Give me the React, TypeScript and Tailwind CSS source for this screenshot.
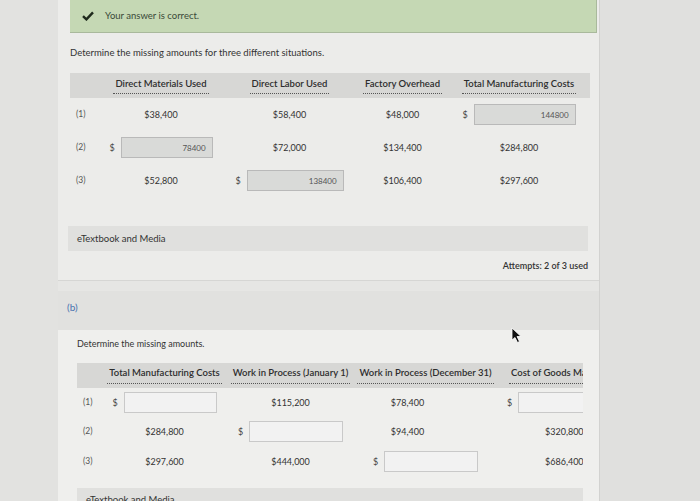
import React from 'react'

const font = { fontFamily: 'Lato, "Open Sans", sans-serif' }

function Input({ value, w, filled }: { value?: string; w: string; filled?: boolean }) {
    return (
        <div
            className={`${w} h-[21px] border flex items-center justify-end pr-[6px] text-[8px] text-[#555] ${filled ? 'bg-[#d9dad8] border-[#b9b9b9]' : 'bg-[#f2f2f2] border-[#c9c9c9]'}`}
        >
            {value}
        </div>
    )
}

function Money({ value, w, filled }: { value?: string; w: string; filled?: boolean }) {
    return (
        <div className="flex items-center gap-[6px]">
            <span className="text-[9px] text-[#444]">$</span>
            <Input value={value} w={w} filled={filled} />
        </div>
    )
}

function Head({ children }: { children: React.ReactNode }) {
    return (
        <span className="border-b border-dotted border-[#555] pb-[2px] px-[2px] font-semibold text-[9.5px] text-[#2d2d2d] whitespace-nowrap">
            {children}
        </span>
    )
}

export default function App() {
    const cols1 = ['w-[30px]', 'w-[122px]', 'w-[135px]', 'w-[91px]', 'w-[142px]']
    const rows1: React.ReactNode[][] = [
        ['(1)', '$38,400', '$58,400', '$48,000', <Money w="w-[102px]" value="144800" filled />],
        ['(2)', <Money w="w-[92px]" value="78400" filled />, '$72,000', '$134,400', '$284,800'],
        ['(3)', '$52,800', <Money w="w-[97px]" value="138400" filled />, '$106,400', '$297,600'],
    ]

    const cols2 = ['w-[29px]', 'w-[117px]', 'w-[135px]', 'w-[135px]', 'w-[110px]']
    const rows2: React.ReactNode[][] = [
        ['(1)', <Money w="w-[93px]" />, '$115,200', <span className="pr-[36px]">$78,400</span>, <div className="pl-[14px] w-full"><Money w="w-[80px]" /></div>],
        ['(2)', '$284,800', <Money w="w-[94px]" />, <span className="pr-[36px]">$94,400</span>, <span className="pl-[52px] whitespace-nowrap">$320,800</span>],
        ['(3)', '$297,600', '$444,000', <Money w="w-[94px]" />, <span className="pl-[52px] whitespace-nowrap">$686,400</span>],
    ]

    return (
        <div className="w-[700px] h-[501px] overflow-hidden bg-[#dfdfdd] flex relative text-[#333]" style={font}>
            <div className="w-[58px] shrink-0 bg-[#e2e2e0]" />
            <div className="w-[542px] shrink-0 flex flex-col bg-[#e6e6e4] border-r border-[#d2d2d0]">
                {/* part (a) card */}
                <div className="shrink-0 bg-[#ececea] h-[281px] pl-[12px] pr-[2px] flex flex-col border-b border-[#d6d6d4]">
                    <div className="h-[33px] bg-[#c5d8b4] border-b border-[#a9b99c] border-r flex items-center pl-[12px] gap-[11px]">
                        <svg width="12" height="10" viewBox="0 0 12 10">
                            <path d="M1 5.2 L4.4 8.4 L11 1.4" fill="none" stroke="#1f2a1c" strokeWidth="2.4" />
                        </svg>
                        <span className="text-[9.5px] text-[#3a4a38]">Your answer is correct.</span>
                    </div>
                    <div className="mt-[13px] text-[9.5px] text-[#333]">Determine the missing amounts for three different situations.</div>
                    <div className="mt-[13px] w-[520px]">
                        <div className="h-[25px] bg-[#d7d7d5] flex items-center">
                            <div className={cols1[0]} />
                            <div className={`${cols1[1]} flex justify-center`}><Head>Direct Materials Used</Head></div>
                            <div className={`${cols1[2]} flex justify-center`}><Head>Direct Labor Used</Head></div>
                            <div className={`${cols1[3]} flex justify-center`}><Head>Factory Overhead</Head></div>
                            <div className={`${cols1[4]} flex justify-center`}><Head>Total Manufacturing Costs</Head></div>
                        </div>
                        {rows1.map((r, i) => (
                            <div key={i} className="h-[33px] flex items-center text-[9px] text-[#333]">
                                {r.map((c, j) => (
                                    <div key={j} className={`${cols1[j]} flex ${j === 0 ? 'pl-[6px] text-[8.5px] text-[#555]' : 'justify-center'}`}>
                                        {c}
                                    </div>
                                ))}
                            </div>
                        ))}
                    </div>
                    <div className="mt-[29px] -ml-[2px] w-[520px] h-[25px] bg-[#e0e0de] flex items-center pl-[9px] text-[9.5px] text-[#333]">
                        eTextbook and Media
                    </div>
                    <div className="w-[518px] text-right mt-[8px] text-[9px] font-semibold text-[#333]">
                        Attempts: 2 of 3 used
                    </div>
                </div>

                {/* part (b) card */}
                <div className="mt-[10px] flex flex-col flex-1">
                    <div className="h-[39px] shrink-0 bg-[#e1e1df] pl-[9px] pt-[9px] text-[10px] text-[#4a73b0]">(b)</div>
                    <div className="flex-1 bg-[#efefed] pl-[19px] flex flex-col">
                        <div className="mt-[7px] text-[9px] text-[#333]">Determine the missing amounts.</div>
                        <div className="mt-[12px] w-[506px] overflow-hidden">
                            <div className="h-[25px] bg-[#d7d7d5] flex items-center">
                                <div className={`${cols2[0]} shrink-0`} />
                                <div className={`${cols2[1]} shrink-0 flex justify-center`}><Head>Total Manufacturing Costs</Head></div>
                                <div className={`${cols2[2]} shrink-0 flex justify-center`}><Head>Work in Process (January 1)</Head></div>
                                <div className={`${cols2[3]} shrink-0 flex justify-center`}><Head>Work in Process (December 31)</Head></div>
                                <div className={`${cols2[4]} shrink-0 flex pl-[16px]`}><Head>Cost of Goods Manufactured</Head></div>
                            </div>
                            {rows2.map((r, i) => (
                                <div key={i} className="h-[29.5px] flex items-center text-[9px] text-[#333]">
                                    {r.map((c, j) => (
                                        <div key={j} className={`${cols2[j]} shrink-0 flex ${j === 0 ? 'pl-[6px] text-[8.5px] text-[#555]' : j === 4 ? '' : 'justify-center'}`}>
                                            {c}
                                        </div>
                                    ))}
                                </div>
                            ))}
                        </div>
                        <div className="mt-[12px] w-[506px] h-[25px] shrink-0 bg-[#e0e0de] flex items-center pl-[9px] text-[9.5px] text-[#333]">
                            eTextbook and Media
                        </div>
                    </div>
                </div>
            </div>
            <div className="flex-1 bg-[#e0e0de]" />

            {/* mouse pointer */}
            <svg className="absolute left-[511px] top-[327px]" width="12" height="17" viewBox="0 0 12 17">
                <path d="M1 1 L1 13 L4 10.5 L6.5 15.5 L8.5 14.5 L6 9.5 L10 9.5 Z" fill="#111" stroke="#fff" strokeWidth="0.8" />
            </svg>
        </div>
    )
}
